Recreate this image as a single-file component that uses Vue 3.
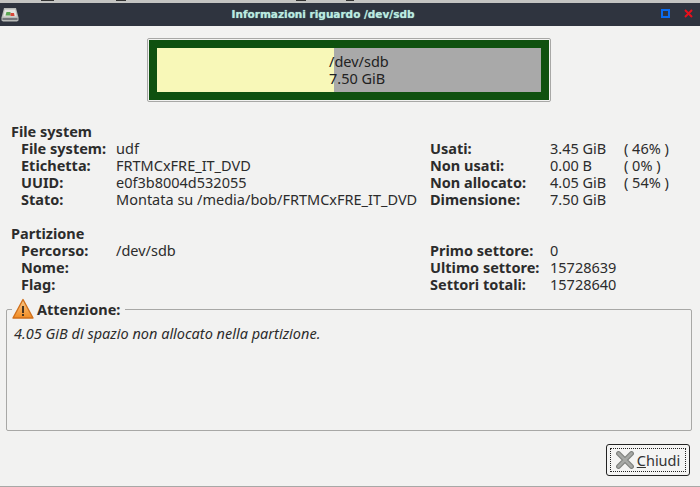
<script setup>
const fsLeft = [
  ['File system:', 'udf'],
  ['Etichetta:', 'FRTMCxFRE_IT_DVD'],
  ['UUID:', 'e0f3b8004d532055'],
  ['Stato:', 'Montata su /media/bob/FRTMCxFRE_IT_DVD']
]
const fsRight = [
  ['Usati:', '3.45 GiB', '( 46% )'],
  ['Non usati:', '0.00 B', '( 0% )'],
  ['Non allocato:', '4.05 GiB', '( 54% )'],
  ['Dimensione:', '7.50 GiB', '']
]
const partLeft = [
  ['Percorso:', '/dev/sdb'],
  ['Nome:', ''],
  ['Flag:', '']
]
const partRight = [
  ['Primo settore:', '0'],
  ['Ultimo settore:', '15728639'],
  ['Settori totali:', '15728640']
]
</script>

<template>
  <div class="window">
    <div class="strip"><i class="a"></i><i class="b"></i><i class="c"></i><i class="d"></i></div>
    <header class="titlebar">
      <svg class="app-icon" width="18" height="15" viewBox="0 0 18 15">
        <path d="M3 1h12l2.500 9.500V13.500L16 14.500H2L.5 13.500v-3z" fill="#b9bbb8" />
        <path d="M3.800 2.500h10.400l1.600 7H2.200z" fill="#e4e5e1" />
        <path d="M5.500 5h4v3.500h-5z" fill="#5aa653" />
        <path d="M9.500 6h3.500l.6 3H9.500z" fill="#d9483a" />
        <rect x="1.500" y="11" width="15" height="2" fill="#74767a" />
      </svg>
      <span class="title">Informazioni riguardo /dev/sdb</span>
      <div class="controls">
        <span class="maximize"></span>
        <svg width="9" height="9" viewBox="0 0 9 9"><path d="M1 1l7 7M8 1L1 8" stroke="#e8101c" stroke-width="2" /></svg>
      </div>
    </header>

    <main class="body">
      <div class="usage">
        <div class="usage-inner">
          <div class="used"></div>
          <div class="free"></div>
          <div class="usage-label">/dev/sdb<br />7.50 GiB</div>
        </div>
      </div>

      <section class="info fs-info">
        <div class="col-left">
          <div class="heading">File system</div>
          <div v-for="r in fsLeft" :key="r[0]" class="row row-left">
            <b>{{ r[0] }}</b><span>{{ r[1] }}</span>
          </div>
        </div>
        <div class="col-right">
          <div class="spacer"></div>
          <div v-for="r in fsRight" :key="r[0]" class="row row-right">
            <b>{{ r[0] }}</b><span>{{ r[1] }}</span><span>{{ r[2] }}</span>
          </div>
        </div>
      </section>

      <section class="info part-info">
        <div class="col-left">
          <div class="heading">Partizione</div>
          <div v-for="r in partLeft" :key="r[0]" class="row row-left">
            <b>{{ r[0] }}</b><span>{{ r[1] }}</span>
          </div>
        </div>
        <div class="col-right">
          <div class="spacer"></div>
          <div v-for="r in partRight" :key="r[0]" class="row row-right">
            <b>{{ r[0] }}</b><span>{{ r[1] }}</span><span></span>
          </div>
        </div>
      </section>

      <fieldset class="frame">
        <legend>
          <svg width="22" height="22" viewBox="0 0 22 22">
            <defs>
              <linearGradient id="warn" x1="0" y1="0" x2="0" y2="1">
                <stop offset="0" stop-color="#fbc98a" />
                <stop offset="1" stop-color="#f28c22" />
              </linearGradient>
            </defs>
            <path d="M11 1.500 21 20H1z" fill="url(#warn)" stroke="#d0701c" stroke-width="1.400" stroke-linejoin="round" />
            <rect x="10" y="8" width="2" height="7" fill="#4a3520" />
            <rect x="10" y="16" width="2" height="2" fill="#4a3520" />
          </svg>
          <b>Attenzione:</b>
        </legend>
        <p>4.05 GiB di spazio non allocato nella partizione.</p>
      </fieldset>

      <div class="actions">
        <button class="close-btn" type="button">
          <span class="focus">
            <svg width="18" height="18" viewBox="0 0 18 18">
              <path d="M2.500 2.500l13 13M15.500 2.500l-13 13" stroke="#7f817e" stroke-width="4.800" stroke-linecap="round" />
              <path d="M2.500 2.500l13 13M15.500 2.500l-13 13" stroke="#a6a8a5" stroke-width="2.600" stroke-linecap="round" />
            </svg>
            <span><u>C</u>hiudi</span>
          </span>
        </button>
      </div>
    </main>
  </div>
</template>

<style>
html, body { margin: 0; background: #f2f2f1; }
</style>

<style scoped>
.window {
  width: 700px;
  height: 487px;
  box-sizing: border-box;
  border-bottom: 1px solid #a8a8a6;
  display: flex;
  flex-direction: column;
  overflow: hidden;
  font-family: "Noto Sans", "Open Sans", sans-serif;
  font-size: 14.5px;
  color: #2c2c2c;
  background: #f2f2f1;
}
.strip {
  height: 3px;
  flex: none;
  display: flex;
  background: #c4c4c2;
}
.strip i { height: 1px; background: #333; }
.strip .a { width: 13px; margin-left: 41px; }
.strip .b { width: 10px; margin-left: 62px; }
.strip .c { width: 10px; margin-left: 170px; }
.strip .d { width: 8px; margin-left: 40px; }
.titlebar {
  height: 23px;
  flex: none;
  display: flex;
  align-items: center;
  justify-content: center;
  padding: 0 54px 1px 0;
  box-sizing: border-box;
  position: relative;
  background: #2f343f;
}
.app-icon { position: absolute; left: 1px; top: 4px; }
.title {
  font-family: "DejaVu Sans", sans-serif;
  font-weight: 700;
  font-size: 10.5px;
  color: #bdeae0;
  text-shadow: 0 0 1px #7fc4b6;
}
.controls {
  position: absolute;
  right: 7px;
  top: 6px;
  display: flex;
  align-items: center;
  gap: 14px;
}
.maximize { width: 5px; height: 5px; border: 2px solid #0a6cf0; }
.body {
  flex: 1;
  display: flex;
  flex-direction: column;
  padding: 12px 8px 0 6px;
  position: relative;
}
.usage {
  align-self: flex-start;
  margin-left: 141px;
  width: 400px;
  height: 60px;
  padding: 1px;
  border: 1px solid #a8a8a6;
  border-radius: 2px;
  box-sizing: content-box;
}
.usage-inner {
  position: relative;
  display: flex;
  height: 44px;
  border: 8px solid #0f510f;
}
.used { width: 177px; background: #f8f8b8; }
.free { flex: 1; background: #a9a9a9; }
.usage-label {
  position: absolute;
  left: 172px;
  top: 5px;
  line-height: 17px;
  color: #222;
}
.info {
  display: flex;
  line-height: 17px;
  padding-left: 5px;
}
.fs-info { margin-top: 21px; }
.part-info { margin-top: 17px; }
.col-left { width: 419px; flex: none; }
.heading { font-weight: 700; height: 17px; }
.spacer { height: 17px; }
.row { display: grid; white-space: nowrap; height: 17px; }
.row-left { grid-template-columns: 95px 1fr; padding-left: 10px; }
.row-right { grid-template-columns: 120px 74px 1fr; }
b { font-weight: 700; }
.frame {
  margin: 5px 0 0;
  padding: 0 7px;
  height: 131px;
  box-sizing: content-box;
  border: 1px solid #a8a8a6;
  border-radius: 2px;
  min-width: 0;
}
.frame legend {
  display: flex;
  align-items: center;
  gap: 3px;
  padding: 0 5px 0 0;
  margin-left: -2px;
  height: 22px;
}
.frame p {
  margin: 5px 0 0;
  font-style: italic;
  line-height: 17px;
}
.actions {
  display: flex;
  justify-content: flex-end;
  padding: 13px 2px 0 0;
}
.close-btn {
  width: 84px;
  height: 32px;
  padding: 3px;
  border: 1px solid #222;
  border-radius: 3px;
  background: #f4f4f3;
  font: inherit;
  color: #333;
  box-sizing: border-box;
}
.focus {
  display: flex;
  align-items: center;
  justify-content: center;
  gap: 3px;
  height: 100%;
  box-sizing: border-box;
  border: 1px dotted #222;
}
</style>
